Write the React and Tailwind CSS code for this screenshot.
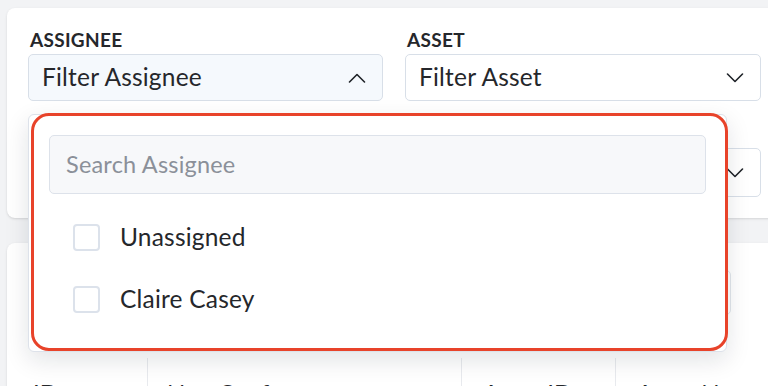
import React from "react";

function Chevron({ up }) {
  return (
    <svg width="18" height="10" viewBox="0 0 18 10" fill="none" className="shrink-0">
      <path
        d={up ? "M1.5 9L9 1.5L16.5 9" : "M1.5 1L9 8.5L16.5 1"}
        stroke="#1f2328"
        strokeWidth="1.6"
        strokeLinecap="round"
        strokeLinejoin="round"
      />
    </svg>
  );
}

function Field({ label, text, active }) {
  return (
    <div className="flex flex-col">
      <div className="h-[20px] text-[19px] leading-[20px] font-bold tracking-[0.3px] text-[#25272b] pl-[2px]">
        {label}
      </div>
      <div
        className={`mt-[4px] h-[47px] rounded-[5px] border border-[#d8dfe8] flex items-center justify-between pl-[13px] pr-[16px] ${
          active ? "bg-[#f5f9fd]" : "bg-white"
        }`}
      >
        <span className="text-[24.5px] text-[#25272b] tracking-[0.2px]">{text}</span>
        <Chevron up={active} />
      </div>
    </div>
  );
}

function CheckRow({ label }) {
  return (
    <div className="flex items-center h-[62px] pl-[44px]">
      <div className="w-[27px] h-[27px] rounded-[4px] border-2 border-[#dce2eb] bg-white" />
      <span className="ml-[20px] text-[24.5px] text-[#25272b] tracking-[0.2px]">{label}</span>
    </div>
  );
}

export default function App() {
  return (
    <div
      className="relative w-[768px] h-[386px] overflow-hidden bg-[#f2f3f5]"
      style={{ fontFamily: "Lato, 'Noto Sans', sans-serif" }}
    >
      <div className="pt-[8px] pl-[7px] flex flex-col gap-[25px]">
        {/* Filters card */}
        <div className="w-[800px] h-[210px] bg-white rounded-[8px] shadow-sm pt-[22px] pl-[21px]">
          <div className="grid grid-cols-[355px_356px] gap-x-[22px] gap-y-[13px]">
            <Field label="ASSIGNEE" text="Filter Assignee" active />
            <Field label="ASSET" text="Filter Asset" />
            <div className="flex flex-col pt-[34px]">
              <div className="h-[49px] rounded-[5px] border border-[#d8dfe8] bg-white flex items-center justify-end pr-[16px]">
                <Chevron />
              </div>
            </div>
            <div className="flex flex-col pt-[34px]">
              <div className="h-[49px] rounded-[5px] border border-[#d8dfe8] bg-white flex items-center justify-end pr-[16px]">
                <Chevron />
              </div>
            </div>
          </div>
        </div>

        {/* Table card */}
        <div className="w-[800px] h-[200px] bg-white rounded-[8px] shadow-sm flex flex-col">
          <div className="h-[115px] flex justify-end pr-[76px] pt-[27px]">
            <div className="w-[300px] h-[45px] rounded-[5px] border border-[#e1e5ec] bg-white" />
          </div>
          <div className="flex h-[60px] text-[24px] text-[#25272b]">
            <div className="w-[140px] pl-[26px] pt-[17px]">ID</div>
            <div className="w-[314px] pl-[19px] pt-[17px] border-l border-[#e8eaee]">Non Conformance</div>
            <div className="w-[154px] pl-[21px] pt-[17px] border-l border-[#e8eaee]">Asset ID</div>
            <div className="w-[180px] pl-[21px] pt-[17px] border-l border-[#e8eaee]">Asset Name</div>
          </div>
        </div>
      </div>

      {/* Dropdown popup */}
      <div className="absolute left-[28px] top-[114px] w-[699px] h-[238px] bg-white border border-[#dde2ea] rounded-[6px] shadow-[0_8px_24px_rgba(15,23,42,0.12)]">
        <div className="px-[20px] pt-[20px]">
          <div className="h-[59px] rounded-[5px] border border-[#dde2ea] bg-[#f7f8fa] flex items-center pl-[16px]">
            <span className="text-[23.5px] text-[#8b9099] tracking-[0.2px]">Search Assignee</span>
          </div>
        </div>
        <div className="pt-[12px]">
          <CheckRow label="Unassigned" />
          <CheckRow label="Claire Casey" />
        </div>
        <div className="pointer-events-none absolute left-[2px] top-[-2px] w-[697px] h-[238px] border-[3px] border-[#e8432a] rounded-[18px]" />
      </div>
    </div>
  );
}
